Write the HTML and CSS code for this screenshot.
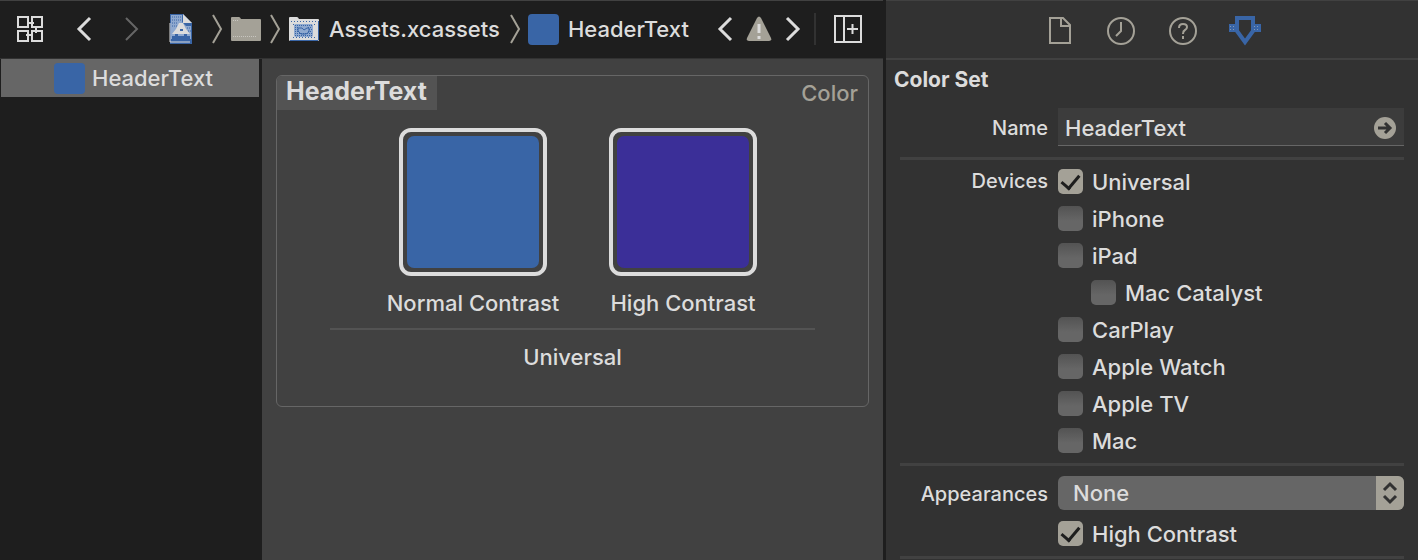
FILE: index.html
```html
<!DOCTYPE html>
<html lang="en">
<head>
<meta charset="utf-8">
<title>Assets.xcassets – HeaderText</title>
<link rel="stylesheet" href="styles.css">
</head>
<body>
<div class="window">
  <div class="editor">
    <header class="toolbar">
      <button class="icon-button" aria-label="Related items">
        <svg width="28" height="28" viewBox="0 0 28 28" fill="none" stroke="currentColor" stroke-width="2">
          <path d="M2 2h10v10H2zM16 2h10v10H16zM2 16h10v10H2zM16 16h10v10H16z"/>
          <path d="M11 8h7M20 11v7M10 20h7"/>
        </svg>
      </button>
      <div class="history">
        <button class="icon-button" aria-label="Back">
          <svg width="16" height="26" viewBox="0 0 16 26" fill="none" stroke="currentColor" stroke-width="3"><path d="M14 2 3 13l11 11"/></svg>
        </button>
        <button class="icon-button icon-button--dim" aria-label="Forward" disabled>
          <svg width="16" height="26" viewBox="0 0 16 26" fill="none" stroke="currentColor" stroke-width="2"><path d="m2 2 11 11L2 24"/></svg>
        </button>
      </div>
      <nav class="path" aria-label="Jump bar">
        <a class="path-item" href="#project" aria-label="Project">
          <svg width="24" height="32" viewBox="0 0 24 32">
            <path d="M1 1h13l9 9v21H1z" fill="#3965a6"/>
            <path d="M2 2h11v7l4 4h5v13H2z" fill="#8fa9cf"/>
            <path d="M14 1v9h9z" fill="#dcdcdc"/>
            <path d="M3 4h10M3 7h11M3 10h6M3 13h5M18 15h4M19 18h3" stroke="#3965a6" stroke-width="1" stroke-dasharray="1 1"/>
            <path d="M10 10h4l3 6 4 5H3l4-5z" fill="#dcdcdc"/>
            <path d="M11 16h3v2h-3z" fill="#3965a6"/>
            <path d="M3 28v-5h3v-2h3v2h6v-2h3v2h3v5z" fill="#3965a6"/>
            <path d="M1 10v19h20" fill="none" stroke="#dcdcdc" stroke-width="1"/>
          </svg>
        </a>
        <svg class="path-arrow" width="12" height="32" viewBox="0 0 12 32" fill="none" stroke="currentColor" stroke-width="2"><path d="m2 2 8 14-8 14"/></svg>
        <a class="path-item" href="#group" aria-label="Group">
          <svg width="32" height="26" viewBox="0 0 32 26"><path d="M1 2q0-1 1-1h7q1 0 2 2h19q1 0 1 1v20q0 1-1 1H2q-1 0-1-1z" fill="#a4a197"/><path d="M3 20.500h24M3 4.500h6" stroke="#c8c6c0" stroke-dasharray="1 1"/></svg>
        </a>
        <svg class="path-arrow" width="12" height="32" viewBox="0 0 12 32" fill="none" stroke="currentColor" stroke-width="2"><path d="m2 2 8 14-8 14"/></svg>
        <a class="path-item" href="#assets">
          <svg width="32" height="26" viewBox="0 0 32 26">
            <path d="M1 2q0-1 1-1h7q1 0 2 2h19q1 0 1 1v20q0 1-1 1H2q-1 0-1-1z" fill="#dcdcdc"/>
            <path d="M3 5.500h27M5 8.500h24M5 21.500h24" stroke="#3965a6" stroke-dasharray="1 2"/>
            <rect x="6" y="8" width="19" height="13" rx="2" fill="#8fa9cf"/>
            <path d="M7 9.500h17M7 11.500h4M20 11.500h4M7 13.500h3M21 13.500h3M7 15.500h4M20 15.500h4M7 17.500h17M7 19.500h17" stroke="#3965a6" stroke-dasharray="1 1"/>
            <path d="M10 15v-3h4l2 2 3-2h2v4l-3 2h-5z" fill="none" stroke="#3965a6" stroke-width="1"/>
            <path d="M2 24.500h28M30.500 5v19" stroke="#3965a6"/>
          </svg>
          <span>Assets.xcassets</span>
        </a>
        <svg class="path-arrow path-arrow--last" width="12" height="32" viewBox="0 0 12 32" fill="none" stroke="currentColor" stroke-width="2"><path d="m2 2 8 14-8 14"/></svg>
        <a class="path-item" href="#headertext"><span class="chip"></span><span>HeaderText</span></a>
      </nav>
      <div class="issues">
        <button class="icon-button" aria-label="Previous issue">
          <svg width="16" height="26" viewBox="0 0 16 26" fill="none" stroke="currentColor" stroke-width="3"><path d="M14 2 3 13l11 11"/></svg>
        </button>
        <button class="icon-button" aria-label="Issues">
          <svg width="26" height="26" viewBox="0 0 26 26"><path d="M11 2q2-3 4 0l10 20q1 3-2 3H3q-3 0-2-3z" fill="#a4a197"/><path d="M13 8v9M13 20v3" stroke="#dcdcdc" stroke-width="3"/></svg>
        </button>
        <button class="icon-button" aria-label="Next issue">
          <svg width="16" height="26" viewBox="0 0 16 26" fill="none" stroke="currentColor" stroke-width="3"><path d="m2 2 11 11L2 24"/></svg>
        </button>
      </div>
      <span class="toolbar-rule"></span>
      <button class="icon-button" aria-label="Add editor">
        <svg width="28" height="28" viewBox="0 0 28 28" fill="none" stroke="currentColor" stroke-width="2"><path d="M1 1h26v26H1zM10 1v26M13 14h11M18.500 9v10"/></svg>
      </button>
    </header>
    <aside class="sidebar">
      <a class="asset" href="#headertext"><span class="chip"></span><span>HeaderText</span></a>
    </aside>
    <main class="canvas">
      <section class="color-set">
        <div class="set-head">
          <h1 class="set-name">HeaderText</h1>
          <span class="set-kind">Color</span>
        </div>
        <div class="wells">
          <figure class="well">
            <button class="swatch" aria-label="Normal Contrast color"><span class="swatch-fill swatch-fill--blue"></span></button>
            <figcaption>Normal Contrast</figcaption>
          </figure>
          <figure class="well">
            <button class="swatch" aria-label="High Contrast color"><span class="swatch-fill swatch-fill--indigo"></span></button>
            <figcaption>High Contrast</figcaption>
          </figure>
        </div>
        <p class="idiom">Universal</p>
      </section>
    </main>
  </div>
  <aside class="inspector">
    <div class="tabs">
      <button class="tab" aria-label="File inspector">
        <svg width="32" height="32" viewBox="0 0 32 32" fill="none" stroke="currentColor" stroke-width="2"><path d="M7 4h13l7 7v18H7zM18 4v8h9"/></svg>
      </button>
      <button class="tab" aria-label="History inspector">
        <svg width="32" height="32" viewBox="0 0 32 32" fill="none" stroke="currentColor" stroke-width="2"><circle cx="16" cy="17" r="13"/><path d="M16 8v9l-5 5"/></svg>
      </button>
      <button class="tab" aria-label="Help inspector">
        <svg width="32" height="32" viewBox="0 0 32 32" fill="none" stroke="currentColor" stroke-width="2"><circle cx="16" cy="17" r="13"/><path d="M12 14q0-4 4-4t4 3q0 2-2 3-2 1-2 4M16 22v3"/></svg>
      </button>
      <button class="tab tab--active" aria-label="Attributes inspector">
        <svg width="32" height="32" viewBox="0 0 32 32" fill="none" stroke="currentColor" stroke-width="4"><path d="M8 4h16v13l-8 11-8-11z"/><path d="M0 14h8M24 14h8" stroke-width="8"/><path d="M1 12.500h6M1 15.500h6M25 12.500h6M25 15.500h6" stroke="#8399b5" stroke-width="1" stroke-dasharray="1 2"/></svg>
      </button>
    </div>
    <form>
      <h2 class="inspector-title">Color Set</h2>
      <div class="group group--name">
        <label class="label" for="name">Name</label>
        <div class="field">
          <input id="name" type="text" value="HeaderText">
          <button class="reveal" type="button" aria-label="Show in navigator">
            <svg width="22" height="22" viewBox="0 0 22 22"><circle cx="11" cy="11" r="11" fill="#a4a197"/><path d="M4 11h11M11 6l5 5-5 5" fill="none" stroke="#323232" stroke-width="3"/></svg>
          </button>
        </div>
      </div>
      <div class="group group--devices" role="group" aria-labelledby="devices">
        <span class="label" id="devices">Devices</span>
        <div class="checks">
          <label class="check"><input type="checkbox" checked>Universal</label>
          <label class="check"><input type="checkbox">iPhone</label>
          <label class="check"><input type="checkbox">iPad</label>
          <label class="check check--nested"><input type="checkbox">Mac Catalyst</label>
          <label class="check"><input type="checkbox">CarPlay</label>
          <label class="check"><input type="checkbox">Apple Watch</label>
          <label class="check"><input type="checkbox">Apple TV</label>
          <label class="check"><input type="checkbox">Mac</label>
        </div>
      </div>
      <div class="group group--appearance">
        <label class="label" for="appearances">Appearances</label>
        <div class="appearance">
          <div class="popup">
            <select id="appearances"><option>None</option></select>
            <svg class="popup-arrows" viewBox="0 0 28 34" fill="none" stroke="#323232" stroke-width="3"><path d="m8 14 6-6 6 6M8 20l6 6 6-6"/></svg>
          </div>
          <label class="check"><input type="checkbox" checked>High Contrast</label>
        </div>
      </div>
    </form>
  </aside>
</div>
</body>
</html>
```

FILE: styles.css
```css
* {
  box-sizing: border-box;
}

body {
  margin: 0;
  background: #323232;
  color: #dcdcdc;
  font: 500 22px/28px Inter, "Liberation Sans", sans-serif;
}

h1, h2, p, figure {
  margin: 0;
}

button, input, select {
  margin: 0;
  padding: 0;
  border: 0;
  background: none;
  color: inherit;
  font: inherit;
}

a {
  color: inherit;
  text-decoration: none;
}

svg {
  display: block;
  flex: none;
}

.window {
  display: grid;
  grid-template-columns: minmax(0, 1fr) 532px;
  min-height: 100vh;
  overflow: hidden;
}

/* Editor */

.editor {
  display: grid;
  grid-template: 59px 1fr / 262px minmax(0, 1fr);
  border-right: 3px solid #1e1e1e;
  background: #1e1e1e;
}

.toolbar {
  grid-column: 1 / -1;
  display: flex;
  align-items: center;
  padding: 0 21px 1px 16px;
  border-top: 1px solid #414141;
  border-bottom: 1px solid #323232;
}

.icon-button--dim {
  color: #666666;
}

.history {
  display: flex;
  gap: 32px;
  margin: 0 29px 0 32px;
}

.path {
  flex: 1;
  display: flex;
  align-items: center;
  gap: 7px;
  white-space: nowrap;
}

.path-item {
  display: flex;
  align-items: center;
  gap: 9px;
}

.path-item:first-child {
  margin-right: 11px;
}

.path-arrow {
  color: #a4a197;
}

.path-arrow--last {
  margin-left: 2px;
}

.chip {
  width: 31px;
  height: 31px;
  border-radius: 4px;
  background: #3965a6;
}

.issues {
  display: flex;
  gap: 13px;
}

.toolbar-rule {
  width: 2px;
  height: 32px;
  margin: 0 18px 0 13px;
  background: #323232;
}

.sidebar {
  padding: 0 3px 0 1px;
}

.asset {
  display: flex;
  align-items: center;
  gap: 7px;
  height: 38px;
  padding-left: 53px;
  background: #666666;
}

.canvas {
  padding: 16px 14px;
  background: #414141;
}

.color-set {
  padding-bottom: 35px;
  border: 1px solid #666666;
  border-radius: 6px;
}

.set-head {
  display: flex;
  justify-content: space-between;
  height: 34px;
}

.set-name {
  padding: 1px 10px 0 9px;
  border-radius: 5px 0 0 0;
  background: #535353;
  font-size: 25px;
  line-height: 28px;
  font-weight: 700;
}

.set-kind {
  padding: 3px 10px 0;
  color: #a4a197;
}

.wells {
  display: grid;
  grid-template-columns: 180px 180px;
  justify-content: center;
  gap: 30px;
  margin: 0 53px;
  padding: 18px 0 11px 11px;
  border-bottom: 2px solid #535353;
}

.well {
  display: flex;
  flex-direction: column;
  align-items: center;
  gap: 13px;
  white-space: nowrap;
}

.swatch {
  width: 148px;
  height: 148px;
  padding: 4px;
  border: 4px solid #dcdcdc;
  border-radius: 12px;
}

.swatch-fill {
  display: block;
  height: 100%;
  border-radius: 7px;
}

.swatch-fill--blue {
  background: #3965a6;
}

.swatch-fill--indigo {
  background: #3b2f98;
}

.idiom {
  padding-top: 13px;
  text-align: center;
}

/* Inspector */

.inspector {
  background: #323232;
  border-top: 1px solid #414141;
}

.tabs {
  display: flex;
  justify-content: center;
  gap: 30px;
  height: 59px;
  padding-top: 13px;
  border-bottom: 2px solid #414141;
}

.tab {
  height: 32px;
  color: #a4a197;
}

.tab--active {
  color: #3965a6;
}

.inspector-title {
  padding: 6px 8px 4px;
  font-size: 21px;
  line-height: 28px;
  font-weight: 700;
}

.group {
  display: grid;
  grid-template-columns: 148px minmax(0, 1fr);
  gap: 10px;
  margin: 0 14px;
  border-bottom: 3px solid #414141;
}

.group--name {
  padding: 10px 0 9px;
}

.group--name .label {
  line-height: 40px;
}

.group--devices {
  padding: 3px 0 4px;
}

.group--appearance {
  padding: 10px 0 4px;
}

.label {
  font-size: 20px;
  line-height: 36px;
  text-align: right;
}

.field {
  display: flex;
  align-items: center;
  height: 38px;
  padding: 2px 8px 0 7px;
  border-bottom: 1px solid #666666;
  background: #3c3c3c;
}

.field input {
  flex: 1;
  min-width: 0;
  outline: 0;
}

.check {
  display: flex;
  align-items: center;
  gap: 9px;
  height: 37px;
}

.check--nested {
  padding-left: 33px;
}

.check input {
  appearance: none;
  width: 25px;
  height: 25px;
  border-radius: 5px;
  background: linear-gradient(#535353, #666666 60%);
}

.check input:checked {
  display: grid;
  place-items: center;
  background: #a4a197;
}

.check input:checked::before {
  content: "";
  width: 8px;
  height: 15px;
  margin-bottom: 4px;
  border: solid #1e1e1e;
  border-width: 0 3px 3px 0;
  transform: rotate(40deg);
}

.appearance {
  display: grid;
  gap: 5px;
}

.popup {
  display: grid;
  border-radius: 6px;
  overflow: hidden;
  background: #666666;
}

.popup select {
  grid-area: 1 / 1;
  appearance: none;
  height: 34px;
  padding: 0 40px 0 15px;
}

.popup-arrows {
  grid-area: 1 / 1;
  justify-self: end;
  width: 28px;
  height: 34px;
  background: #a4a197;
  pointer-events: none;
}
```
